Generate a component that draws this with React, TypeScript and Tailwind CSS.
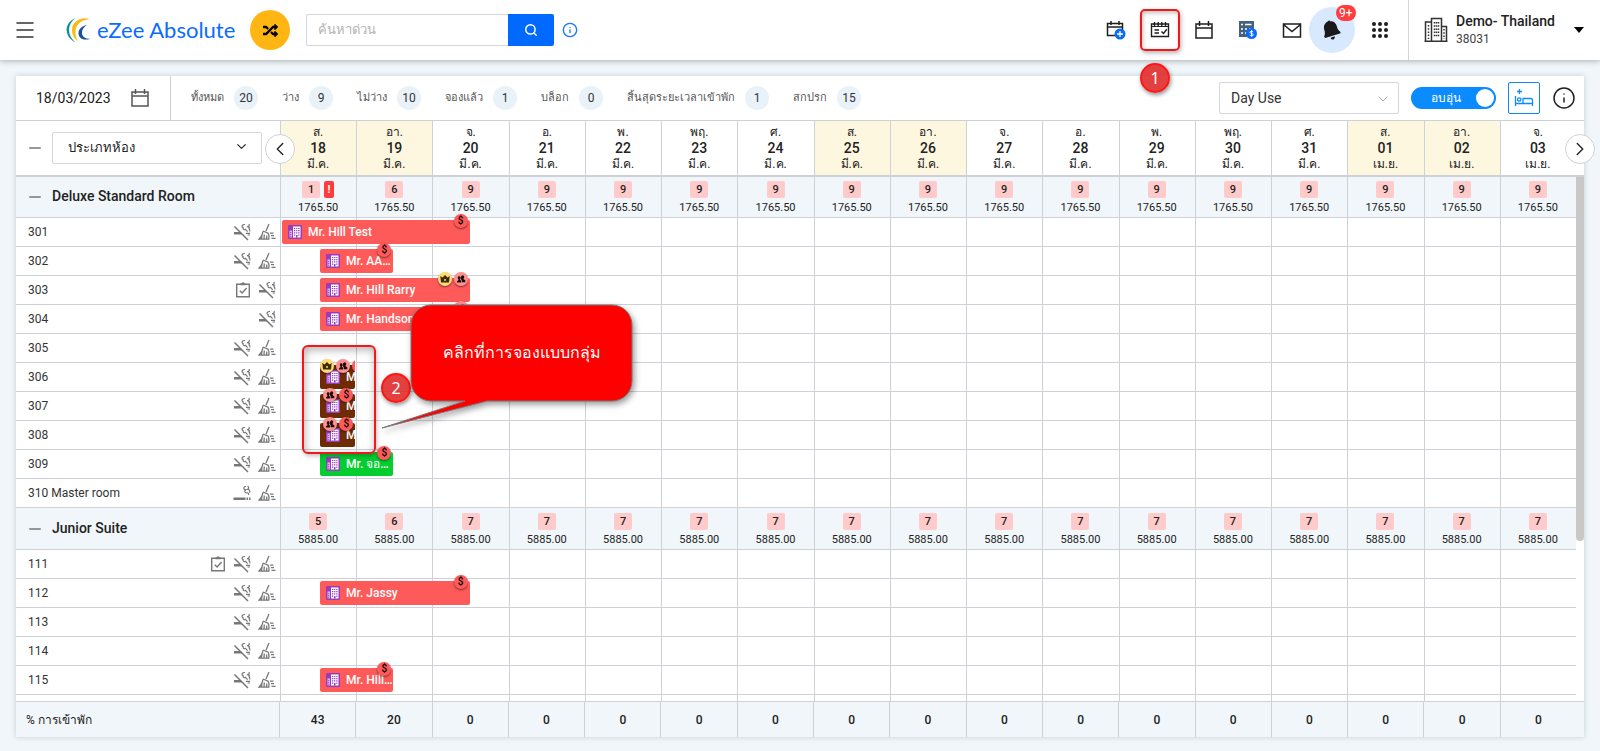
import { Menu, Search, Info, ChevronDown, ChevronLeft, ChevronRight, Minus } from "lucide-react";
import { FaRandom } from "react-icons/fa";
import type { ReactNode } from "react";

type Flag = "money" | "group" | "owner";
type Booking = { name: string; start: number; end: number; color: string; flags: Flag[] };
type Room = { name: string; inspected?: boolean; smoking?: "no" | "yes"; dirty?: boolean; booking?: Booking };
type Group = { name: string; rate: string; free: number[]; rooms: Room[] };

const RED = "bg-[#ff5a5a]";
const BROWN = "bg-[#6f2c04]";
const GREEN = "bg-[#03cd2f]";

const DAYS = [
  ["ส.", "18", "มี.ค."],
  ["อา.", "19", "มี.ค."],
  ["จ.", "20", "มี.ค."],
  ["อ.", "21", "มี.ค."],
  ["พ.", "22", "มี.ค."],
  ["พฤ.", "23", "มี.ค."],
  ["ศ.", "24", "มี.ค."],
  ["ส.", "25", "มี.ค."],
  ["อา.", "26", "มี.ค."],
  ["จ.", "27", "มี.ค."],
  ["อ.", "28", "มี.ค."],
  ["พ.", "29", "มี.ค."],
  ["พฤ.", "30", "มี.ค."],
  ["ศ.", "31", "มี.ค."],
  ["ส.", "01", "เม.ย."],
  ["อา.", "02", "เม.ย."],
  ["จ.", "03", "เม.ย."],
];

const STATS: [string, number][] = [
  ["ทั้งหมด", 20],
  ["ว่าง", 9],
  ["ไม่ว่าง", 10],
  ["จองแล้ว", 1],
  ["บล็อก", 0],
  ["สิ้นสุดระยะเวลาเข้าพัก", 1],
  ["สกปรก", 15],
];

const OCCUPANCY = [43, 20, 0, 0, 0, 0, 0, 0, 0, 0, 0, 0, 0, 0, 0, 0, 0];

const GROUPS: Group[] = [
  {
    name: "Deluxe Standard Room",
    rate: "1765.50",
    free: [1, 6, 9, 9, 9, 9, 9, 9, 9, 9, 9, 9, 9, 9, 9, 9, 9],
    rooms: [
      { name: "301", smoking: "no", dirty: true, booking: { name: "Mr. Hill Test", start: 0, end: 2.5, color: RED, flags: ["money"] } },
      { name: "302", smoking: "no", dirty: true, booking: { name: "Mr. AA…", start: 0.5, end: 1.5, color: RED, flags: ["money"] } },
      { name: "303", inspected: true, smoking: "no", booking: { name: "Mr. Hill Rarry", start: 0.5, end: 2.5, color: RED, flags: ["owner", "group"] } },
      { name: "304", smoking: "no", booking: { name: "Mr. Handsome", start: 0.5, end: 2.5, color: RED, flags: ["group"] } },
      { name: "305", smoking: "no", dirty: true },
      { name: "306", smoking: "no", dirty: true, booking: { name: "M", start: 0.5, end: 1, color: BROWN, flags: ["owner", "group", "money"] } },
      { name: "307", smoking: "no", dirty: true, booking: { name: "M", start: 0.5, end: 1, color: BROWN, flags: ["group", "money"] } },
      { name: "308", smoking: "no", dirty: true, booking: { name: "M", start: 0.5, end: 1, color: BROWN, flags: ["group", "money"] } },
      { name: "309", smoking: "no", dirty: true, booking: { name: "Mr. จอ…", start: 0.5, end: 1.5, color: GREEN, flags: ["money"] } },
      { name: "310 Master room", smoking: "yes", dirty: true },
    ],
  },
  {
    name: "Junior Suite",
    rate: "5885.00",
    free: [5, 6, 7, 7, 7, 7, 7, 7, 7, 7, 7, 7, 7, 7, 7, 7, 7],
    rooms: [
      { name: "111", inspected: true, smoking: "no", dirty: true },
      { name: "112", smoking: "no", dirty: true, booking: { name: "Mr. Jassy", start: 0.5, end: 2.5, color: RED, flags: ["money"] } },
      { name: "113", smoking: "no", dirty: true },
      { name: "114", smoking: "no", dirty: true },
      { name: "115", smoking: "no", dirty: true, booking: { name: "Mr. Hill…", start: 0.5, end: 1.5, color: RED, flags: ["money"] } },
      { name: "" },
    ],
  },
];

function LogoMark() {
  return (
    <svg viewBox="0 0 26 26" className="h-[26px] w-[26px]">
      <path d="M9.500 1C3 4 0 9 .7 14s3.500 9 9 11.500C5.500 22 3 18 3 12.500 3.200 8 5.500 4 9.500 1z" fill="#0f8f98" />
      <path d="M24 2C14-.8 6 5 6 13c0 5 2 8.500 6 11-2.500-4-3-7.500-2.300-11.500C10.700 6.500 16 2.800 24 2z" fill="#fdb913" />
      <path d="M21 8c-5.500 1-8.800 4.500-8.500 9 .5 4.500 5.500 7 12 4.700-4.500.2-8-1.500-8.500-5.200C15.700 13 17.500 10 21 8z" fill="#1d4f9c" />
    </svg>
  );
}

function CalendarIcon({ className }: { className: string }) {
  return (
    <svg viewBox="0 0 20 20" fill="none" stroke="currentColor" strokeWidth={1.5} className={className}>
      <path d="M2 4h16v14H2zM2 8h16M5.500 1v5M14.500 1v5" />
    </svg>
  );
}

function CalendarAddIcon() {
  return (
    <svg viewBox="0 0 20 20" fill="none" stroke="#1f1f1f" strokeWidth={1.500} className="h-5 w-5">
      <path d="M10 15.500H1.500V3.500h15V10M1.500 7h15M5 1v4M13 1v4" />
      <circle cx="14" cy="14" r="5.500" fill="#0a6cff" stroke="none" />
      <path d="M14 11v6M11 14h6" stroke="#fff" strokeWidth={1.300} />
    </svg>
  );
}

function CalendarListIcon() {
  return (
    <svg viewBox="0 0 20 20" fill="none" stroke="#1f1f1f" strokeWidth={1.400} className="h-5 w-5">
      <path d="M1.500 4h17v12.500h-17z" />
      <path d="M1.500 6.500h17" strokeWidth={1} />
      <path d="M4.500 2v4M8.200 2v4M11.800 2v4M15.500 2v4M4.500 10h4.500M4.500 13h4.500M11.500 11.500l2 2 3.300-4.200" />
    </svg>
  );
}

function InvoiceIcon() {
  return (
    <svg viewBox="0 0 20 20" className="h-5 w-5">
      <path d="M1 1h15v16H1z" fill="#44627e" />
      <path d="M3 4.500h2M7 4.500h6.500M3 9h2M7 9h2M11 9h2M3 13h2M7 13h1" stroke="#fff" strokeWidth={1.600} />
      <circle cx="13.500" cy="13.500" r="5.500" fill="#0a6cff" />
      <path d="M15.200 11.800c-.4-.7-3.300-.9-3.300.5 0 1.500 3.400.8 3.400 2.400 0 1.400-3 1.300-3.500.3M13.600 10.300v6.400" fill="none" stroke="#fff" />
    </svg>
  );
}

function MailIcon() {
  return (
    <svg viewBox="0 0 20 20" fill="none" stroke="#1f1f1f" strokeWidth={1.500} className="h-5 w-5">
      <path d="M1.500 4h17v13h-17zM1.500 4.500l8.500 7 8.500-7" />
    </svg>
  );
}

function BellIcon() {
  return (
    <svg viewBox="0 0 20 22" fill="#1a1a1a" className="h-[22px] w-5">
      <path d="M6 2.200l1.200-.9.800 1c3.200-.6 5.800 1.400 6.600 4.300.7 2.700 1 4.400 3.600 6.100l.5 1.500L3.200 19l-1.100-1.300c1.200-2.600.9-4.700.1-7.300C1.300 7 2.700 4 6 2.200z" />
      <path d="M8.500 18.700l4.400-1.500c.1 2-.7 3.200-1.900 3.400-1.100.1-2-.6-2.500-1.900z" />
    </svg>
  );
}

function AppsIcon() {
  return (
    <svg viewBox="0 0 18 18" fill="#1f1f1f" className="h-[18px] w-[18px]">
      {[3, 9, 15].map((y) => [3, 9, 15].map((x) => <circle key={`${x}-${y}`} cx={x} cy={y} r="2" />))}
    </svg>
  );
}

function HotelIcon() {
  return (
    <svg viewBox="0 0 24 26" fill="none" stroke="#333" strokeWidth={1.500} className="h-[26px] w-6">
      <path d="M1.500 24V5h6M7.500 24V1.500h10V24M17.500 9.500h5V24M.5 24.200h23" />
      <path d="M4.500 8v14M10.500 5v15M12.500 5v15M14.500 5v15M20 12v10" strokeDasharray="1.500 1.700" />
    </svg>
  );
}

function BedIcon() {
  return (
    <svg viewBox="0 0 20 20" fill="none" stroke="#0a8bff" strokeWidth={1.300} className="h-5 w-5">
      <path d="M1.500 8v10M1.500 15.500h17M18.500 18v-5.500c0-1.500-1-2-2-2H9v5M5.500 1v5M3 3.500h5" />
      <circle cx="5.200" cy="11.500" r="1.700" />
    </svg>
  );
}

function InspectedIcon() {
  return (
    <svg viewBox="0 0 16 16" fill="none" stroke="#777" strokeWidth={1.400} className="h-4 w-4">
      <path d="M1.700 2.200h12.600v12.600H1.700zM4.800 8.700l2.300 2.300 4.500-5" />
      <path d="M5.500 3.300V1.300h1.200c.3-1.300 2.300-1.300 2.600 0h1.200v2z" fill="#777" stroke="none" />
    </svg>
  );
}

function SmokingIcon({ banned }: { banned: boolean }) {
  return (
    <svg viewBox="0 0 18 18" fill="none" stroke="#777" strokeWidth={1.200} className="h-[18px] w-[18px]">
      {banned ? (
        <>
          <path d="M1 9h6.500l2.300 2.500H1z" fill="#777" stroke="none" />
          <path d="M1.500 3.500l13.500 13.500" strokeWidth={1.500} />
          <path d="M13 10.300h4M14.500 12h2.500" />
          <path d="M12 1.500c-2.800-.2-4 2.200-1.800 3.200-.6 1.700.9 2.500 2.500 1.700.4 1 1.200 1.300 1.800 2.300M16 1c.8 1.600-.2 2.800-2 2.600 2.200 0 3 1 2 2.200.9.500 1 1.600.8 2.700" />
        </>
      ) : (
        <>
          <path d="M.5 13.500h12V16H.5z" fill="#777" stroke="none" />
          <path d="M13.500 14.700h1.500M16 14.700h1.500" strokeWidth={2.500} />
          <path d="M13 2.500c-2.800.1-3 3.200-.3 3.300-1.700 1.400-.8 3.200 1 3 1.600-.2 2 .7 2 2.300M14.500 2c1.500.8 1.500 2.500.2 3.300 1.800.3 2.700 1.800 1.800 3.500" />
        </>
      )}
    </svg>
  );
}

function BroomIcon() {
  return (
    <svg viewBox="0 0 18 18" fill="none" stroke="#777" strokeWidth={1.300} className="h-[18px] w-[18px]">
      <path d="M11 1L8 8M5 8l5.500 2.300M4.800 8.500c0 3-1.500 5.200-3.800 7.700h9.800c.4-2.200.3-4-.6-5.700" />
      <path d="M4 12.500l-.6 3.500M6.300 11.500l-.3 4.500M8.700 12.500v3.500" />
      <path d="M12 10.200h3.500M13 12.700h3M13.500 15.300h4" />
    </svg>
  );
}

function BookingSourceIcon() {
  return (
    <svg viewBox="0 0 14 14" className="h-[14px] w-[14px] shrink-0">
      <rect width="14" height="14" rx="1" fill="#963cbd" />
      <path d="M5 1.500h7.500v11H5z" fill="#fff" />
      <path d="M1.500 5.500H4v7H1.500z" fill="#dcb4ea" />
      <path d="M6 3.500h1.300M8.100 3.500h1.300M10.200 3.500h1.300M6 5.700h1.300M8.100 5.700h1.300M10.200 5.700h1.300M6 7.900h1.300M8.100 7.900h1.300M10.200 7.900h1.300M6 10.100h1.300M10.200 10.100h1.300" stroke="#963cbd" strokeWidth={1.200} />
      <path d="M8 10h1.500v2.500H8z" fill="#963cbd" />
      <path d="M2 7.500h1.300M2 9.500h1.300M2 11.300h1.300" stroke="#963cbd" strokeWidth={0.800} />
    </svg>
  );
}

function FlagBadge({ flag }: { flag: Flag }) {
  const shell = "flex h-[14px] w-[14px] shrink-0 items-center justify-center rounded-full shadow-[0_1px_2px_rgba(0,0,0,0.5)]";
  if (flag === "money") {
    return <span className={`${shell} bg-[#ff5a5a] text-[10px] font-medium leading-none text-black`}>$</span>;
  }
  if (flag === "group") {
    return (
      <span className={`${shell} bg-[#ff9090]`}>
        <svg viewBox="0 0 10 10" className="h-[10px] w-[10px]" fill="#1a0d0d">
          <path d="M3.200 2.300c1 0 1.400.7 1.400 1.500S4.300 5 4 5.300v.6L5 6.500v2H1V7.300l1.400-1V5.300C2 5 1.800 4.500 1.800 3.800c0-.8.400-1.500 1.400-1.500z" />
          <path d="M6.600 1.200c1.100 0 1.600.8 1.600 1.700S7.900 4.300 7.600 4.600v.7l1.700 1v1.900H5.700V6.100l-.8-.6V4.200C4.900 3.800 5 1.200 6.600 1.200z" />
        </svg>
      </span>
    );
  }
  return (
    <span className={`${shell} bg-[#ffdc73]`}>
      <svg viewBox="0 0 10 10" className="h-[10px] w-[10px]">
        <path d="M.3 2l2.200 1.500L5 1l2.500 2.500L9.700 2 9 8.500H1z" fill="#3b2a0a" />
        <path d="M5 4.500L6.200 6 5 7.300 3.800 6z" fill="#ffdc73" />
      </svg>
    </span>
  );
}

function StepMarker({ children }: { children: ReactNode }) {
  return (
    <span className="flex h-[30px] w-[30px] items-center justify-center rounded-full border-2 border-[#ff1515] bg-[#e02b2b]/90 font-['Noto_Sans','Open_Sans',sans-serif] text-[16px] text-white shadow-[1px_2px_4px_rgba(0,0,0,0.45)]">
      {children}
    </span>
  );
}

function BookingBar({ booking }: { booking: Booking }) {
  const days = DAYS.length;
  return (
    <div
      className="absolute top-[2px] h-6"
      style={{
        left: `calc(${(booking.start / days) * 100}% + 2px)`,
        width: `calc(${((booking.end - booking.start) / days) * 100}% - 3px)`,
      }}
    >
      <div className={`flex h-full items-center gap-[6px] overflow-hidden rounded-[2px] pl-[6px] text-[12px] font-medium text-white ${booking.color}`}>
        <BookingSourceIcon />
        <span className="whitespace-nowrap">{booking.name}</span>
      </div>
      <div className={`absolute -top-[6px] left-0 flex gap-[2px] overflow-x-clip ${booking.flags.length > 2 ? "right-0" : "right-[2px] justify-end"}`}>
        {booking.flags.map((flag) => (
          <FlagBadge key={flag} flag={flag} />
        ))}
      </div>
    </div>
  );
}

function RoomRow({ room }: { room: Room }) {
  return (
    <div className="flex h-[29px]">
      <div className="flex w-[264px] shrink-0 items-center border-b border-[#ced1d7] pl-3 pr-1">
        <span className="flex-1 text-[12px] text-[#333]">{room.name}</span>
        <div className="flex items-center gap-[7px]">
          {room.inspected && <InspectedIcon />}
          {room.smoking && <SmokingIcon banned={room.smoking === "no"} />}
          {room.dirty && <BroomIcon />}
        </div>
      </div>
      <div className="relative grid flex-1 grid-cols-17">
        {DAYS.map((day) => (
          <div key={day[1]} className="border-b border-l border-[#ced1d7]" />
        ))}
        {room.booking && <BookingBar booking={room.booking} />}
      </div>
    </div>
  );
}

function GroupHeader({ group, warn }: { group: Group; warn: boolean }) {
  return (
    <div className="flex h-[42px] bg-[#f0f6f9]">
      <div className="flex w-[264px] shrink-0 items-center gap-2 border-b border-[#ced1d7] pl-[10px]">
        <button type="button" aria-label={`Collapse ${group.name}`} className="text-[#777]">
          <Minus size={18} />
        </button>
        <h2 className="text-[14px] font-medium text-[#222]">{group.name}</h2>
      </div>
      <div className="grid flex-1 grid-cols-17">
        {DAYS.map((day, i) => (
          <div key={day[1]} className="flex flex-col items-center border-b border-l border-[#ced1d7] pr-px pt-[5px]">
            <div className="flex gap-1">
              <span className="h-[17px] w-[18px] rounded-[2px] bg-[#fecaca] text-center text-[11px] font-medium leading-[17px] text-[#222]">
                {group.free[i]}
              </span>
              {warn && i === 0 && (
                <span className="h-[17px] w-[10px] rounded-[2px] bg-[#ff3b3b] text-center text-[11px] font-bold leading-[17px] text-white">!</span>
              )}
            </div>
            <span className="text-[11px] leading-[19px] text-[#222]">{group.rate}</span>
          </div>
        ))}
      </div>
    </div>
  );
}

function TopBar() {
  return (
    <header className="relative z-20 flex h-[60px] shrink-0 items-center bg-white shadow-[0_1px_6px_rgba(0,0,0,0.3)]">
      <button type="button" aria-label="Menu" className="ml-[13px] text-[#333]">
        <Menu size={24} strokeWidth={1.500} />
      </button>
      <a href="#" className="ml-[29px] flex items-center gap-[5px]">
        <LogoMark />
        <span className="w-[139px] whitespace-nowrap font-[Lato,sans-serif] text-[22px] leading-[26px] text-[#0a6cff]">eZee Absolute</span>
      </a>
      <button type="button" aria-label="Switch" className="ml-[14px] flex h-10 w-10 items-center justify-center rounded-full bg-[#ffb612] text-black">
        <FaRandom size={15} />
      </button>
      <form className="ml-4 flex h-8">
        <input
          type="text"
          aria-label="ค้นหาด่วน"
          placeholder="ค้นหาด่วน"
          className="w-[202px] rounded-l-[2px] border border-r-0 border-[#d3d6da] px-[11px] text-[13px] placeholder:text-[#b4b4b4]"
        />
        <button type="button" aria-label="Search" className="flex w-[46px] items-center justify-center rounded-r-[2px] bg-[#0069ff] text-white">
          <Search size={14} strokeWidth={2.500} />
        </button>
      </form>
      <Info size={16} className="ml-2 text-[#1677ff]" />

      <div className="ml-auto flex h-full items-center">
        <button type="button" aria-label="Add booking" className="mr-6">
          <CalendarAddIcon />
        </button>
        <button type="button" aria-label="Stay view" className="relative mr-6">
          <CalendarListIcon />
          <span className="absolute -inset-x-[10px] -inset-y-[11px] rounded-[5px] border-2 border-[#f01818] shadow-[1px_2px_4px_rgba(0,0,0,0.3),inset_1px_2px_4px_rgba(0,0,0,0.25)]" />
          <span className="absolute -left-[10px] top-[43px]">
            <StepMarker>1</StepMarker>
          </span>
        </button>
        <button type="button" aria-label="Calendar" className="mr-6">
          <CalendarIcon className="h-5 w-5 text-[#1f1f1f]" />
        </button>
        <button type="button" aria-label="Invoices" className="mr-6">
          <InvoiceIcon />
        </button>
        <button type="button" aria-label="Messages" className="mr-[7px]">
          <MailIcon />
        </button>
        <button type="button" aria-label="Notifications" className="relative mr-4 flex h-[46px] w-[46px] items-center justify-center rounded-full bg-[#d7e8ff]">
          <BellIcon />
          <span className="absolute -top-[2px] left-[27px] rounded-full bg-[#ff3d3d] px-[3px] text-[12px] leading-4 text-white">9+</span>
        </button>
        <button type="button" aria-label="Apps" className="mr-[19px]">
          <AppsIcon />
        </button>
        <button type="button" className="flex h-full items-center border-l border-[#d3d6da] pl-[15px] pr-4 text-left">
          <HotelIcon />
          <span className="ml-2 w-[118px]">
            <span className="block text-[14px] font-medium leading-[18px] text-[#222]">Demo- Thailand</span>
            <span className="block text-[12px] leading-[18px] text-[#444]">38031</span>
          </span>
          <span className="border-x-[5px] border-t-[6px] border-x-transparent border-t-black" />
        </button>
      </div>
    </header>
  );
}

function Toolbar() {
  return (
    <div className="flex h-[45px] items-center border-b border-[#ced1d7]">
      <button type="button" className="flex h-full w-[155px] items-center gap-[19px] border-r border-[#ced1d7] pl-5 text-[14px] text-[#222]">
        18/03/2023
        <CalendarIcon className="h-5 w-5 text-[#555]" />
      </button>
      <ul className="ml-5 flex items-center gap-6">
        {STATS.map(([label, count]) => (
          <li key={label} className="flex items-center gap-[10px] text-[11px] text-[#555]">
            {label}
            <span className="flex h-6 w-6 items-center justify-center rounded-full bg-[#e9f2f8] text-[12px] text-[#333]">{count}</span>
          </li>
        ))}
      </ul>
      <div className="ml-auto flex items-center gap-3 pr-2">
        <div className="relative">
          <select aria-label="Booking type" className="h-8 w-[180px] appearance-none rounded-[2px] border border-[#d3d6da] bg-white px-[11px] text-[14px] text-[#333]">
            <option>Day Use</option>
          </select>
          <ChevronDown size={16} strokeWidth={1.500} className="pointer-events-none absolute right-2 top-[9px] text-[#aaa]" />
        </div>
        <label className="relative flex h-[22px] w-[85px] items-center rounded-full bg-[#0a8bff] pl-5 text-[12px] text-white">
          <input type="checkbox" defaultChecked className="sr-only" />
          อบอุ่น
          <span className="absolute right-[2px] top-[2px] h-[18px] w-[18px] rounded-full bg-white" />
        </label>
        <button type="button" aria-label="Beds" className="flex h-8 w-8 items-center justify-center rounded-[2px] border border-[#0a8bff]">
          <BedIcon />
        </button>
        <button type="button" aria-label="Legend" className="text-[#222]">
          <Info size={24} strokeWidth={1.500} />
        </button>
      </div>
    </div>
  );
}

function DayHeader() {
  return (
    <div className="relative z-10 flex h-[55px] border-b border-[#ced1d7] bg-white pr-2 shadow-[0_1px_0_#ced1d7]">
      <div className="flex w-[264px] shrink-0 items-center gap-2 pl-[10px]">
        <button type="button" aria-label="Collapse all" className="text-[#777]">
          <Minus size={18} />
        </button>
        <div className="relative">
          <select aria-label="ประเภทห้อง" className="h-8 w-[210px] appearance-none rounded-[2px] border border-[#d3d6da] bg-white px-[15px] text-[13px] text-[#222]">
            <option>ประเภทห้อง</option>
          </select>
          <ChevronDown size={15} strokeWidth={1.800} className="pointer-events-none absolute right-[13px] top-[7px] text-[#222]" />
        </div>
      </div>
      <div className="grid flex-1 grid-cols-17">
        {DAYS.map(([weekday, date, month]) => (
          <div
            key={date}
            className={`flex flex-col items-center border-l border-[#ced1d7] pr-px pt-[3px] text-[12px] leading-4 text-[#222] ${
              weekday === "ส." || weekday === "อา." ? "bg-[#fef7df]" : ""
            }`}
          >
            <span>{weekday}</span>
            <span className="text-[14px] font-medium">{date}</span>
            <span>{month}</span>
          </div>
        ))}
      </div>
      <button type="button" aria-label="Previous days" className="absolute left-[249px] top-[13px] flex h-[30px] w-[30px] items-center justify-center rounded-full border border-[#ced1d7] bg-white text-[#222]">
        <ChevronLeft size={22} strokeWidth={1.500} />
      </button>
      <button type="button" aria-label="Next days" className="absolute -right-[11px] top-[13px] flex h-[30px] w-[30px] items-center justify-center rounded-full border border-[#ced1d7] bg-white text-[#222]">
        <ChevronRight size={22} strokeWidth={1.500} />
      </button>
    </div>
  );
}

// Help balloons laid over the grid
function Callouts() {
  return (
    <>
      <span className="absolute left-[286px] top-[169px] h-[109px] w-[74px] rounded-[6px] border-2 border-[#f01818] shadow-[1px_2px_4px_rgba(0,0,0,0.25),inset_1px_3px_8px_rgba(0,0,0,0.3)]" />
      <span className="absolute left-[365px] top-[197px]">
        <StepMarker>2</StepMarker>
      </span>
      <div className="absolute left-[364px] top-[127px] h-[128px] w-[256px]">
        <svg viewBox="0 0 256 128" className="h-full w-full overflow-visible [filter:drop-shadow(2px_3px_3px_rgba(0,0,0,0.4))]">
          <path
            d="M51 2h181a20 20 0 0 1 20 20v56a20 20 0 0 1-20 20H107L2 125l83-27H51a20 20 0 0 1-20-20V22a20 20 0 0 1 20-20z"
            fill="#ff0000"
            stroke="#777"
            strokeWidth={1}
          />
        </svg>
        <p className="absolute left-[31px] top-[2px] flex h-24 w-[221px] items-center justify-center text-[16px] text-white">คลิกที่การจองแบบกลุ่ม</p>
      </div>
    </>
  );
}

export default function App() {
  return (
    <div className="flex h-screen flex-col bg-[#f0f6f9] font-[Roboto,'Noto_Sans',sans-serif] text-[#222]">
      <TopBar />
      <main className="flex min-h-0 flex-1 flex-col px-4 pb-[14px] pt-4">
        <section className="flex min-h-0 flex-1 flex-col bg-white shadow-[0_0_5px_rgba(60,90,130,0.25)]">
          <Toolbar />
          <DayHeader />
          <div className="relative flex min-h-0 flex-1 overflow-hidden">
            <div className="flex-1">
              {GROUPS.map((group, i) => (
                <div key={group.name}>
                  <GroupHeader group={group} warn={i === 0} />
                  {group.rooms.map((room) => (
                    <RoomRow key={room.name} room={room} />
                  ))}
                </div>
              ))}
            </div>
            <div className="w-2">
              <div className="h-[365px] rounded-b-full bg-[#c8c8c8]" />
            </div>
            <Callouts />
          </div>
          <div className="flex h-9 border-t border-[#ced1d7] bg-[#f0f6f9] pr-2 text-[12px]">
            <div className="flex w-[263px] shrink-0 items-center pl-[10px]">% การเข้าพัก</div>
            <div className="grid flex-1 grid-cols-17">
              {OCCUPANCY.map((value, i) => (
                <div key={i} className="flex items-center justify-center border-l border-[#ced1d7] font-medium">
                  {value}
                </div>
              ))}
            </div>
          </div>
        </section>
      </main>
    </div>
  );
}
